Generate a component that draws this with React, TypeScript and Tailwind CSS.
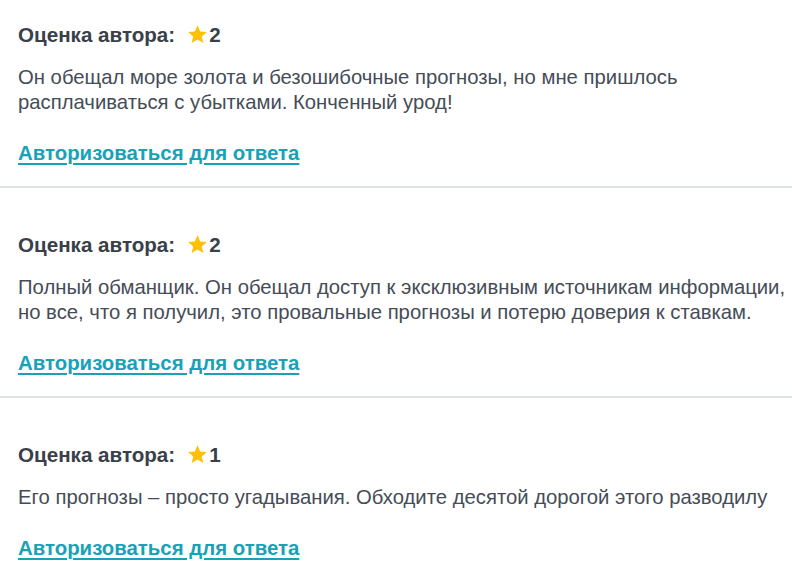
import React from "react";

type Review = {
  rating: number;
  text: string;
};

const reviews: Review[] = [
  {
    rating: 2,
    text: "Он обещал море золота и безошибочные прогнозы, но мне пришлось расплачиваться с убытками. Конченный урод!",
  },
  {
    rating: 2,
    text: "Полный обманщик. Он обещал доступ к эксклюзивным источникам информации, но все, что я получил, это провальные прогнозы и потерю доверия к ставкам.",
  },
  {
    rating: 1,
    text: "Его прогнозы – просто угадывания. Обходите десятой дорогой этого разводилу",
  },
];

const Star = () => (
  <svg viewBox="0 0 24 24" className="h-[21px] w-[21px] fill-[#ffc107]">
    <path d="M12 1.5l3.1 7.1 7.6.6-5.8 5 1.8 7.5L12 17.7l-6.7 4 1.8-7.5-5.8-5 7.6-.6z" />
  </svg>
);

const App = () => {
  return (
    <div className="w-[792px] bg-white font-[family-name:'Liberation_Sans',Arial,sans-serif]">
      {reviews.map((r, i) => (
        <div
          key={i}
          className={`pl-[18px] pb-[19px] border-b-2 border-[#dee2e6] ${i === 0 ? "pt-[22px]" : "pt-[44px]"}`}
        >
          <div className="flex items-center text-[20.6px] leading-[25px] font-bold text-[#3a4049]">
            <span>Оценка автора:</span>
            <span className="ml-[12px] flex items-center">
              <Star />
              <span className="ml-px">{r.rating}</span>
            </span>
          </div>
          <p className="mt-[18px] text-[20.3px] leading-[25px] text-[#454c57]">{r.text}</p>
          <a
            href="#"
            className="mt-[26px] inline-block text-[20.4px] leading-[25px] font-bold text-[#17a2b8] underline decoration-2 underline-offset-[3px]"
          >
            Авторизоваться для ответа
          </a>
        </div>
      ))}
    </div>
  );
};

export default App;
